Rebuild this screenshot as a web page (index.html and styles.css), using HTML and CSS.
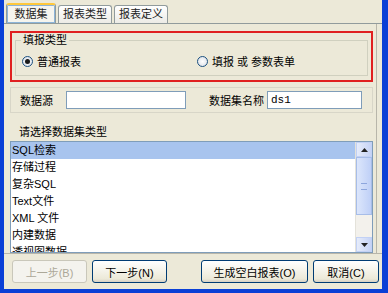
FILE: index.html
```html
<!DOCTYPE html>
<html>
<head>
    <title>数据集</title>
    <link rel="stylesheet" href="styles.css">
</head>
<body>
    <div class="window">
        <div class="tabs">
            <div class="tab tab-active">数据集</div>
            <div class="tab">报表类型</div>
            <div class="tab">报表定义</div>
        </div>
        <div class="panel">
            <div class="red-box">
                <div class="group">
                    <span class="group-title">填报类型</span>
                    <div class="radio-row">
                        <label class="radio"><span class="dot dot-on"></span>普通报表</label>
                        <label class="radio"><span class="dot"></span>填报 或 参数表单</label>
                    </div>
                </div>
            </div>
            <div class="field-row">
                <span class="label">数据源</span>
                <span class="input input-wide"></span>
                <span class="label label-right">数据集名称</span>
                <span class="input input-short">ds1</span>
            </div>
            <div class="list-title">请选择数据集类型</div>
            <div class="list">
                <div class="items">
                    <div class="item item-selected">SQL检索</div>
                    <div class="item">存储过程</div>
                    <div class="item">复杂SQL</div>
                    <div class="item">Text文件</div>
                    <div class="item">XML 文件</div>
                    <div class="item">内建数据</div>
                    <div class="item">透视图数据</div>
                </div>
                <div class="scrollbar">
                    <div class="arrow">
                        <svg width="7" height="4" viewBox="0 0 7 4"><path d="M0 4 L3.5 0 L7 4 Z" fill="#222"/></svg>
                    </div>
                    <div class="thumb"><span class="grip"></span></div>
                    <div class="track"></div>
                    <div class="arrow">
                        <svg width="7" height="4" viewBox="0 0 7 4"><path d="M0 0 L3.5 4 L7 0 Z" fill="#222"/></svg>
                    </div>
                </div>
            </div>
        </div>
        <div class="buttons">
            <div class="btn-group">
                <button class="btn btn-disabled">上一步(B)</button>
                <button class="btn">下一步(N)</button>
            </div>
            <div class="btn-group">
                <button class="btn btn-large">生成空白报表(O)</button>
                <button class="btn btn-small">取消(C)</button>
            </div>
        </div>
    </div>
</body>
</html>
```
FILE: styles.css
```css
body {
    margin: 0;
    background-color: #0a3fd6;
    font-family: "Liberation Sans", "Noto Sans CJK SC", sans-serif;
    font-size: 11px;
    color: #000000;
}

.window {
    width: 378px;
    height: 289px;
    margin-left: 4px;
    background-color: #ece9d8;
    display: flex;
    flex-direction: column;
    box-sizing: border-box;
    padding: 3px 0 0 0;
}

.tabs {
    display: flex;
    padding-left: 2px;
    height: 20px;
    border-bottom: 1px solid #919b9c;
    gap: 2px;
}

.tab {
    width: 54px;
    text-align: center;
    box-sizing: border-box;
    height: 18px;
    margin-top: 2px;
    line-height: 17px;
    border: 1px solid #919b9c;
    border-bottom: none;
    border-radius: 3px 3px 0 0;
    background: linear-gradient(#ffffff, #ecebe6);
    color: #222222;
}

.tab-active {
    width: 50px;
    margin-top: 0;
    height: 20px;
    line-height: 18px;
    background: #f5f4ee;
    border-top: 2px solid #ffc83c;
    box-shadow: inset 0 0 0 1px #8cb4d8;
}

.panel {
    flex: 1;
    margin: 0 5px 0 3px;
    padding: 7px 3px 0 3px;
    border-right: 1px solid #b8b6aa;
    display: flex;
    flex-direction: column;
}

.red-box {
    border: 2px solid #e02020;
    padding: 2px 3px 3px 3px;
    height: 42px;
}

.group {
    border: 1px solid #d0d0bf;
    height: 34px;
    margin-top: 5px;
    position: relative;
    display: flex;
    align-items: center;
}

.group-title {
    position: absolute;
    top: -8px;
    left: 5px;
    padding: 0 2px;
    background-color: #ece9d8;
    line-height: 14px;
}

.radio-row {
    display: flex;
    width: 100%;
    padding-left: 6px;
    padding-top: 6px;
}

.radio {
    display: flex;
    align-items: center;
    gap: 4px;
    width: 175px;
}

.dot {
    width: 9px;
    height: 9px;
    border: 1px solid #1c5180;
    border-radius: 50%;
    background: radial-gradient(#ffffff, #d6dbe3);
    position: relative;
}

.dot-on::after {
    content: "";
    position: absolute;
    left: 2px;
    top: 2px;
    width: 5px;
    height: 5px;
    border-radius: 50%;
    background-color: #1a1a1a;
}

.field-row {
    display: flex;
    align-items: center;
    margin-top: 5px;
    height: 24px;
    border: 1px solid #d8d6c8;
    padding-left: 9px;
}

.label {
    width: 46px;
}

.label-right {
    margin-left: 23px;
    width: 58px;
}

.input {
    height: 16px;
    border: 1px solid #7f9db9;
    background-color: #ffffff;
    line-height: 16px;
    padding-left: 3px;
    font-family: "Liberation Mono", monospace;
    font-size: 11px;
}

.input-wide {
    width: 115px;
}

.input-short {
    width: 90px;
}

.list-title {
    margin-top: 11px;
    padding-left: 9px;
    height: 16px;
    line-height: 16px;
}

.list {
    margin-top: 1px;
    display: flex;
    height: 110px;
    border: 1px solid #7f9db9;
    background-color: #ffffff;
    overflow: hidden;
}

.items {
    flex: 1;
}

.item {
    height: 17px;
    line-height: 17px;
    padding-left: 1px;
}

.item-selected {
    background-color: #a8c4ee;
}

.scrollbar {
    width: 16px;
    display: flex;
    flex-direction: column;
    background-color: #f3f1ec;
    border-left: 1px solid #e4e2da;
}

.arrow {
    height: 15px;
    display: flex;
    align-items: center;
    justify-content: center;
    background: linear-gradient(90deg, #e6ecfa, #c6d3f5);
    border: 1px solid #c2d1f5;
    box-sizing: border-box;
}

.thumb {
    height: 58px;
    background: linear-gradient(90deg, #dce6fb, #bfd0f7);
    border: 1px solid #a7bde8;
    box-sizing: border-box;
    display: flex;
    align-items: center;
    justify-content: center;
}

.grip {
    width: 6px;
    height: 5px;
    border-top: 1px solid #8da6dd;
    border-bottom: 1px solid #8da6dd;
}

.track {
    flex: 1;
}

.buttons {
    height: 35px;
    border-top: 1px solid #b8b6aa;
    display: flex;
    justify-content: space-between;
    align-items: center;
    padding: 0 3px 0 8px;
}

.btn-group {
    display: flex;
    gap: 5px;
}

.btn {
    font-family: "Liberation Sans", "Noto Sans CJK SC", sans-serif;
    font-size: 11px;
    white-space: nowrap;
    width: 75px;
    height: 23px;
    background: linear-gradient(#ffffff, #ece9d8 85%, #d6d0c5);
    border: 1px solid #003c74;
    border-radius: 3px;
    color: #000000;
    padding: 0;
}

.btn-disabled {
    color: #aca899;
    border-color: #c9c7ba;
    background: #f4f3ee;
}

.btn-large {
    width: 107px;
}

.btn-small {
    width: 66px;
}
```
